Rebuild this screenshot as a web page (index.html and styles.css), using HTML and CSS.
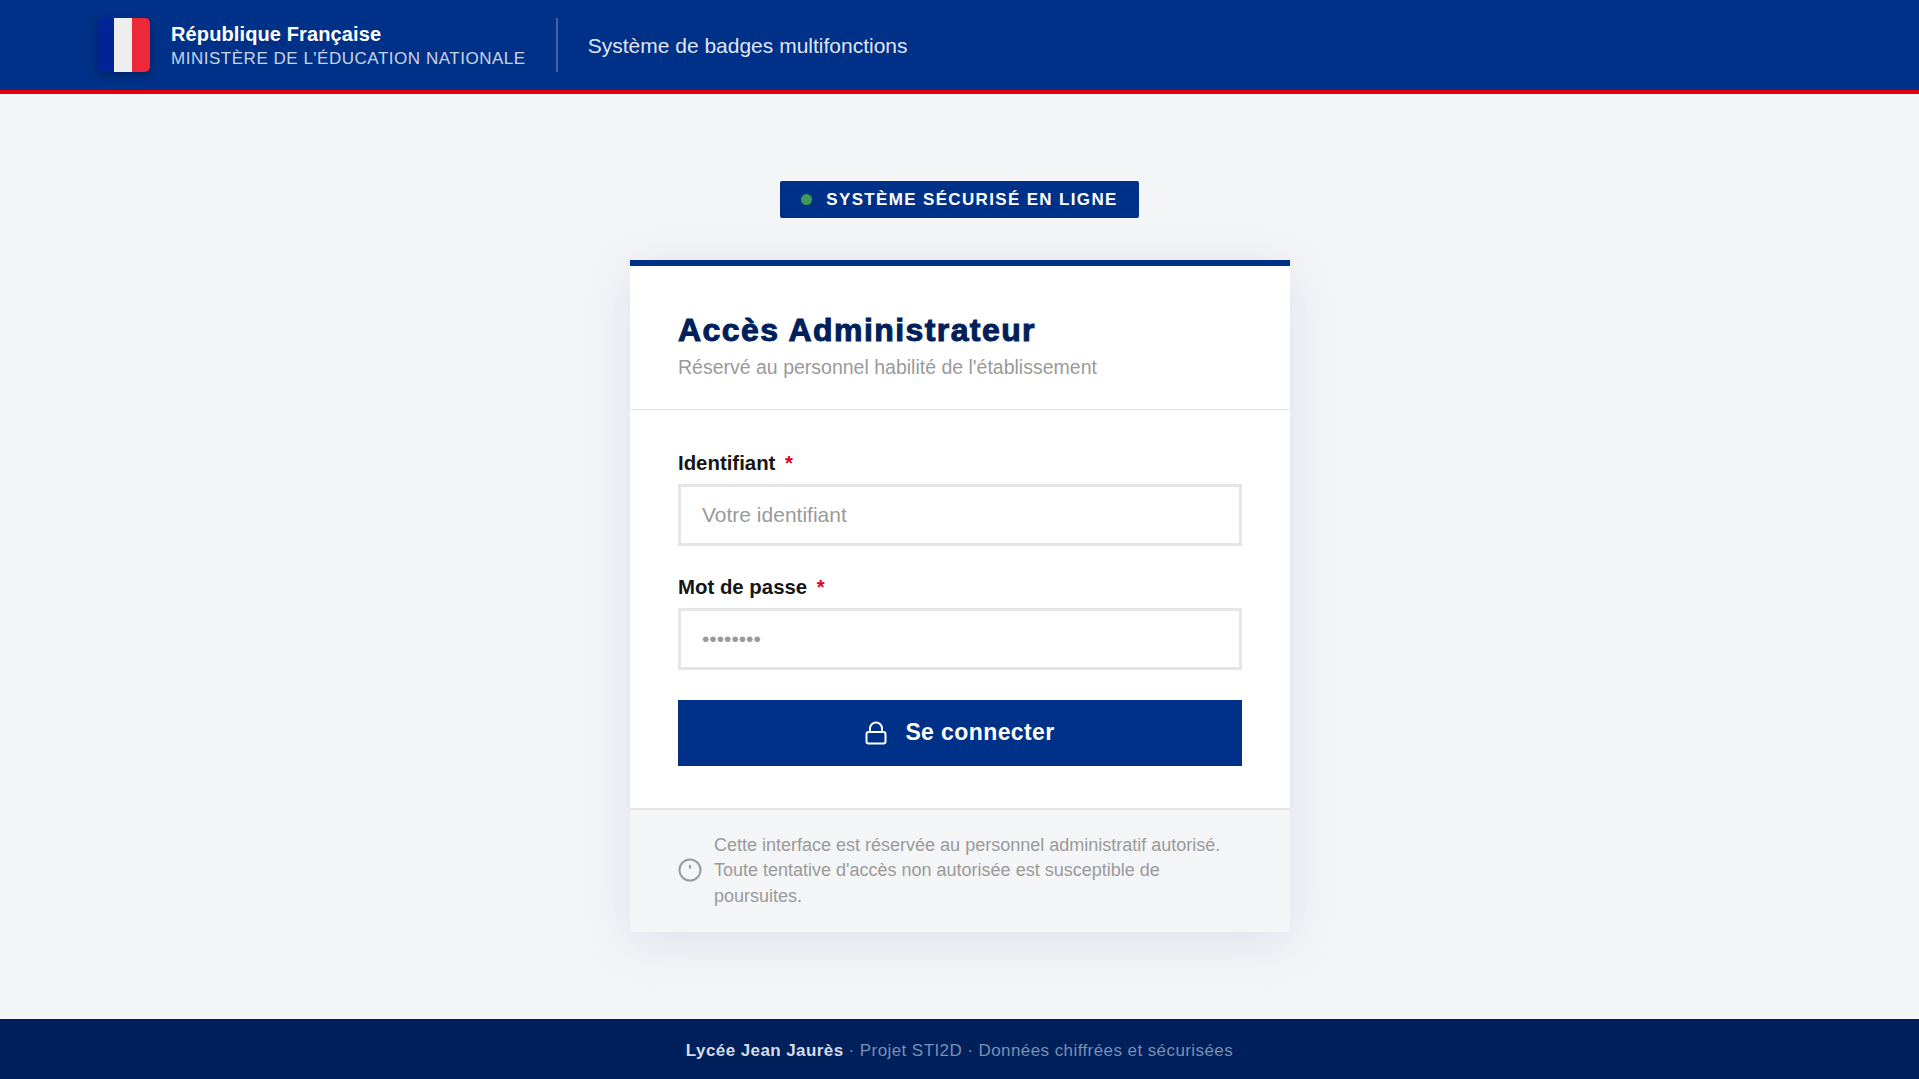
FILE: index.html
```html
<!DOCTYPE html>
<html lang="fr">
<head>
    <meta charset="UTF-8">
    <meta name="viewport" content="width=device-width, initial-scale=1.0">
    <title>Système de badges multifonctions</title>
    <link rel="stylesheet" href="styles.css">
</head>
<body>
    <header class="site-header">
        <div class="flag"><span class="flag-blue"></span><span class="flag-white"></span><span class="flag-red"></span></div>
        <div class="brand">
            <div class="brand-name">République Française</div>
            <div class="brand-sub">MINISTÈRE DE L'ÉDUCATION NATIONALE</div>
        </div>
        <div class="header-title">Système de badges multifonctions</div>
    </header>

    <main class="main">
        <div class="status-badge"><span class="status-dot"></span>SYSTÈME SÉCURISÉ EN LIGNE</div>

        <section class="card">
            <div class="card-head">
                <h1>Accès Administrateur</h1>
                <p>Réservé au personnel habilité de l'établissement</p>
            </div>
            <form class="card-form">
                <label class="field-label" for="identifiant">Identifiant <span class="required">*</span></label>
                <input class="field-input" id="identifiant" type="text" placeholder="Votre identifiant">
                <label class="field-label" for="motdepasse">Mot de passe <span class="required">*</span></label>
                <input class="field-input" id="motdepasse" type="password" placeholder="••••••••">
                <button class="submit-btn" type="button">
                    <svg class="lock-icon" viewBox="0 0 22 24" fill="none" stroke="currentColor" stroke-width="2" stroke-linejoin="round">
                        <rect x="1.5" y="11" width="19" height="11.5" rx="2"></rect>
                        <path d="M5 11V7.5a6 6 0 0 1 12 0V11"></path>
                    </svg>
                    <span>Se connecter</span>
                </button>
            </form>
            <div class="card-note">
                <svg class="note-icon" viewBox="0 0 24 24" fill="none" stroke="currentColor" stroke-width="2">
                    <circle cx="12" cy="12" r="10.5"></circle>
                    <path d="M12 7v3.5"></path>
                </svg>
                <p>Cette interface est réservée au personnel administratif autorisé. Toute tentative d'accès non autorisée est susceptible de poursuites.</p>
            </div>
        </section>
    </main>

    <footer class="site-footer">
        <strong>Lycée Jean Jaurès</strong> · Projet STI2D · Données chiffrées et sécurisées
    </footer>
</body>
</html>
```

FILE: styles.css
```css
* {
    box-sizing: border-box;
}
body {
    margin: 0;
    min-height: 100vh;
    display: flex;
    flex-direction: column;
    font-family: "Liberation Sans", Arial, sans-serif;
    background-color: #f4f5f7;
    color: #161616;
}
.site-header {
    height: 94px;
    padding: 0 96px 0 97px;
    display: flex;
    align-items: center;
    background-color: #003189;
    border-bottom: 4px solid #e1000f;
    color: white;
}
.flag {
    width: 53px;
    height: 54px;
    display: flex;
    border-radius: 5px;
    overflow: hidden;
    box-shadow: 0 3px 10px rgba(0,0,0,0.3);
}
.flag-blue { width: 17px; background-color: #002395; }
.flag-white { width: 18px; background-color: #eeeeee; }
.flag-red { width: 18px; background-color: #ed2939; }
.brand {
    margin-left: 21px;
    padding-right: 30px;
    height: 54px;
    display: flex;
    flex-direction: column;
    justify-content: center;
    border-right: 2px solid rgba(255,255,255,0.25);
}
.brand-name {
    font-size: 20px;
    font-weight: bold;
    line-height: 26px;
    letter-spacing: 0.12px;
}
.brand-sub {
    font-size: 17px;
    line-height: 23px;
    letter-spacing: 0.52px;
    color: rgba(255,255,255,0.8);
}
.header-title {
    margin-left: 30px;
    padding-top: 2px;
    font-size: 21px;
    color: rgba(255,255,255,0.9);
}
.main {
    flex: 1;
    display: flex;
    flex-direction: column;
    align-items: center;
    justify-content: center;
}
.status-badge {
    height: 37px;
    padding: 0 21px;
    display: flex;
    align-items: center;
    margin-bottom: 42px;
    background-color: #003189;
    border-radius: 2px;
    color: white;
    font-size: 17px;
    font-weight: bold;
    letter-spacing: 1.34px;
}
.status-dot {
    width: 11px;
    height: 11px;
    margin-right: 14px;
    border-radius: 50%;
    background-color: #3f9a57;
}
.card {
    width: 660px;
    margin-left: 1px;
    background-color: white;
    border-top: 6px solid #003189;
    box-shadow: 0 10px 50px rgba(0,49,137,0.1);
}
.card-head {
    height: 144px;
    padding: 45px 48px 0;
    border-bottom: 1px solid #e5e5e5;
}
.card-head h1 {
    margin: 0;
    font-size: 32px;
    line-height: 38px;
    font-weight: bold;
    letter-spacing: 1.42px;
    -webkit-text-stroke: 1px #00205b;
    color: #00205b;
}
.card-head p {
    margin: 7px 0 0;
    font-size: 19.5px;
    color: #9a9a9a;
}
.card-form {
    padding: 41px 48px 42px;
    display: flex;
    flex-direction: column;
}
.field-label {
    font-size: 20.4px;
    font-weight: bold;
    line-height: 24px;
    margin-bottom: 9px;
}
.required {
    color: #e1000f;
    margin-left: 4px;
}
.field-input {
    height: 62px;
    padding: 0 21px;
    margin-bottom: 29px;
    border: 3px solid #e5e5e5;
    font-family: inherit;
    font-size: 21px;
    outline: none;
}
.field-input::placeholder {
    color: #9a9a9a;
}
.submit-btn {
    height: 66px;
    margin-top: 1px;
    padding: 0 0 2px;
    display: flex;
    align-items: center;
    justify-content: center;
    gap: 18px;
    border: none;
    background-color: #003189;
    color: white;
    font-family: inherit;
    font-size: 23px;
    font-weight: bold;
    letter-spacing: 0.4px;
}
.lock-icon {
    width: 22px;
    height: 24px;
    margin-top: 2px;
}
.card-note {
    padding: 22.5px 48px 23px;
    display: flex;
    align-items: center;
    gap: 12px;
    background-color: #f4f5f7;
    border-top: 2px solid #e5e5e5;
    color: #9a9a9a;
}
.card-note p {
    margin: 0;
    font-size: 18px;
    line-height: 25.5px;
}
.note-icon {
    width: 24px;
    height: 24px;
    margin-top: -1px;
    flex-shrink: 0;
}
.site-footer {
    height: 60px;
    padding-top: 3px;
    display: flex;
    align-items: center;
    justify-content: center;
    gap: 5px;
    background-color: #00205b;
    color: #7a8fb5;
    font-size: 17px;
    letter-spacing: 0.42px;
}
.site-footer strong {
    color: #d5dbe8;
}
```
